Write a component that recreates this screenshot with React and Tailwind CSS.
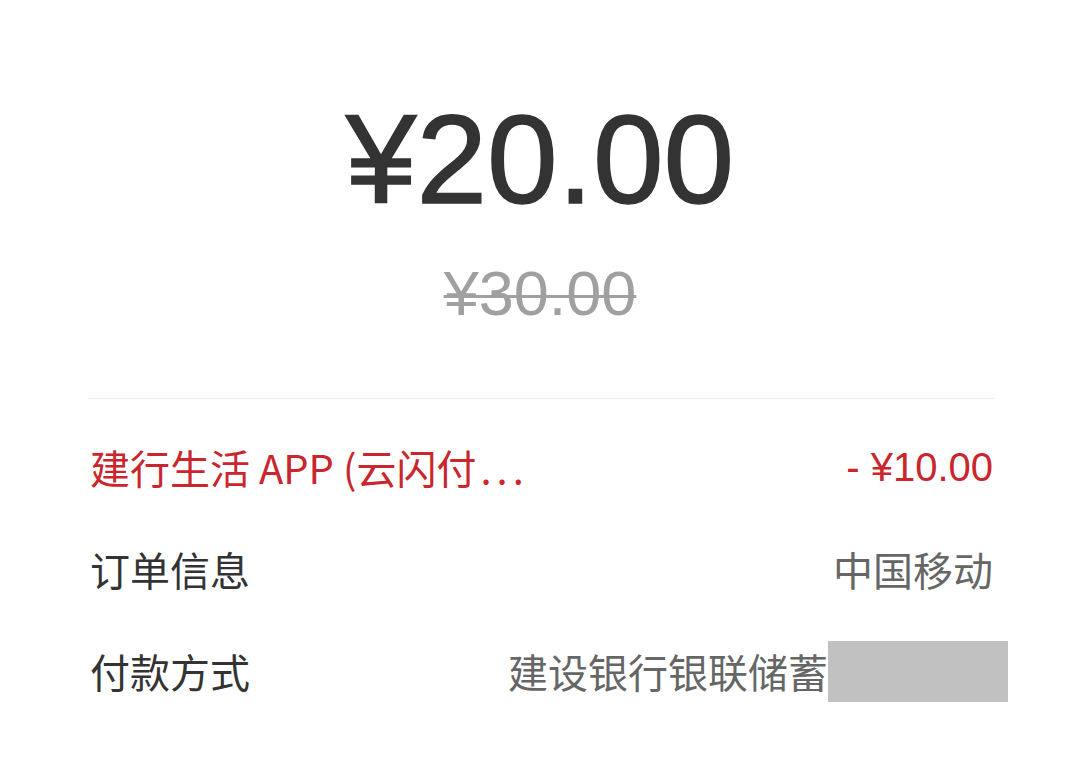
export default function App() {
  const cjk = { fontFamily: '"Noto Sans CJK SC", "Noto Sans", sans-serif' };
  const num = { fontFamily: '"Liberation Sans", Arial, sans-serif' };
  return (
    <div className="w-[1080px] h-[772px] bg-white overflow-hidden" style={cjk}>
      <div className="flex flex-col items-center pt-[96px]">
        <div className="text-[127px] leading-none text-[#333333] [-webkit-text-stroke:1.5px_#333333]" style={num}>¥20.00</div>
        <div className="mt-[39px] text-[63px] leading-none text-[#a0a0a0] line-through decoration-[3px]" style={num}>¥30.00</div>
      </div>
      <div className="mt-[73px] ml-[88px] mr-[85px] h-px bg-[#ececec]" />
      <div className="pl-[90px] pr-[87px] pt-[17px]">
        <div className="h-[102px] flex items-center justify-between text-[40px] text-[#c9262e]">
          <span className="whitespace-nowrap">建行生活 APP (云闪付<span className="tracking-[5px] ml-[4px]">...</span></span>
          <span style={num}>- ¥10.00</span>
        </div>
        <div className="h-[102px] flex items-center justify-between text-[40px]">
          <span className="text-[#333333]">订单信息</span>
          <span className="text-[#666666]">中国移动</span>
        </div>
        <div className="h-[102px] flex items-center justify-between text-[40px]">
          <span className="text-[#333333]">付款方式</span>
          <div className="flex items-center">
            <span className="text-[#666666] whitespace-nowrap">建设银行银联储蓄</span>
            <div className="w-[180px] h-[61px] bg-[#c1c1c1] mr-[-15px]" />
          </div>
        </div>
      </div>
    </div>
  );
}
